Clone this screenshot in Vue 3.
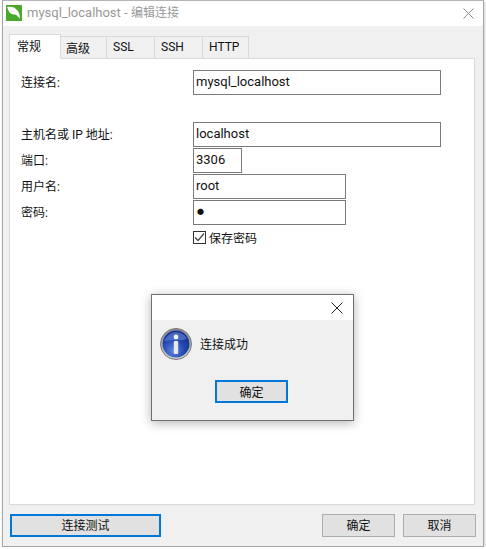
<template>
  <div class="window">
    <div class="titlebar">
      <svg class="logo" width="16" height="16" viewBox="0 0 16 16">
        <rect width="16" height="16" fill="#4aa82c" />
        <path d="M1 2c4-1 8 0 10 3 2 2 3 5 3 9l-1.500-2.500L12 13c0-2-1-3-3-3.500-2 0-4-.5-5.500-2C2.500 6 2 4 1 2z" fill="#fff" />
      </svg>
      <span class="title">mysql_localhost - <span class="title-cjk">编辑连接</span></span>
      <svg class="close close-main" width="11" height="11" viewBox="0 0 11 11">
        <path d="M.5.5l10 10M10.5.5l-10 10" stroke="#8a8a8a" fill="none" />
      </svg>
    </div>

    <div class="body">
      <div class="tabs">
        <div
          v-for="(tab, i) in tabs"
          :key="tab"
          class="tab"
          :class="{ active: i === 0 }"
        >
          {{ tab }}
        </div>
      </div>

      <div class="panel">
        <div v-for="row in rows" :key="row.label" class="row" :class="row.cls">
          <label class="label">{{ row.label }}</label>
          <div class="input" :class="row.size">{{ row.value }}</div>
        </div>
        <div class="check-row">
          <span class="checkbox">
            <svg width="11" height="11" viewBox="0 0 11 11">
              <path d="M1 5.5l3 3 6-7" stroke="#444" stroke-width="1.2" fill="none" />
            </svg>
          </span>
          <span>保存密码</span>
        </div>
      </div>

      <div class="footer">
        <button class="btn primary test">连接测试</button>
        <div class="right-btns">
          <button class="btn">确定</button>
          <button class="btn">取消</button>
        </div>
      </div>
    </div>

    <div class="dialog">
      <div class="dialog-title">
        <svg width="12" height="12" viewBox="0 0 12 12">
          <path d="M.5.5l11 11M11.5.5l-11 11" stroke="#222" fill="none" />
        </svg>
      </div>
      <div class="dialog-body">
        <div class="message">
          <svg class="info" width="32" height="32" viewBox="0 0 32 32">
            <defs>
              <radialGradient id="blue" cx="40%" cy="75%" r="75%">
                <stop offset="0" stop-color="#5f86e0" />
                <stop offset="0.55" stop-color="#2347b0" />
                <stop offset="1" stop-color="#14308f" />
              </radialGradient>
              <linearGradient id="ring" x1="0" y1="0" x2="0" y2="1">
                <stop offset="0" stop-color="#8d8d8d" />
                <stop offset="1" stop-color="#d5d5d5" />
              </linearGradient>
            </defs>
            <circle cx="16" cy="16" r="15.5" fill="url(#ring)" stroke="#777" stroke-width="1" />
            <circle cx="16" cy="16" r="13.5" fill="url(#blue)" />
            <path d="M4 13c3-6 8-9 12-9s8 2 11 6c-3 4-14 1-23 3z" fill="#7f9fe6" opacity="0.45" />
            <circle cx="16" cy="9" r="2.4" fill="#f2f2f2" />
            <rect x="13.8" y="13" width="4.4" height="13" rx="1" fill="#e9e9e9" />
          </svg>
          <span class="message-text">连接成功</span>
        </div>
        <button class="btn primary ok">确定</button>
      </div>
    </div>
  </div>
</template>

<script setup>
const tabs = ["常规", "高级", "SSL", "SSH", "HTTP"];

const rows = [
  { label: "连接名:", value: "mysql_localhost", size: "wide", cls: "first" },
  { label: "主机名或 IP 地址:", value: "localhost", size: "wide" },
  { label: "端口:", value: "3306", size: "small" },
  { label: "用户名:", value: "root", size: "medium" },
  { label: "密码:", value: "●", size: "medium pass" },
];
</script>

<style>
html,
body {
  background: #fff;
}
</style>

<style scoped>
* {
  box-sizing: border-box;
}

.window {
  position: relative;
  width: 482px;
  height: 547px;
  margin-left: 2px;
  border: 1px solid #a6a6a6;
  border-top-color: #b5b5b5;
  background: #f0f0f0;
  box-shadow: 1px 1px 3px rgba(0, 0, 0, 0.2);
  font-family: Roboto, "Noto Sans CJK SC", sans-serif;
  font-size: 12px;
  color: #111;
}

.titlebar {
  display: flex;
  align-items: center;
  height: 25px;
  padding-left: 3px;
  padding-bottom: 2px;
  background: #fff;
}

.logo {
  flex: none;
}

.title {
  margin-left: 5px;
  padding-bottom: 2px;
  font-size: 13px;
  color: #999;
}

.title-cjk {
  font-size: 12px;
}

.close-main {
  margin-left: auto;
  margin-right: 9px;
  margin-top: 2px;
}

.body {
  padding: 9px 8px 0 6px;
}

.tabs {
  display: flex;
  height: 24px;
}

.tab {
  display: flex;
  align-items: center;
  width: 49px;
  height: 23px;
  margin-top: 1px;
  margin-left: -1px;
  padding-left: 6px;
  padding-bottom: 1px;
  border: 1px solid #d9d9d9;
  background: #f0f0f0;
}

.tab:first-child {
  margin-left: 0;
}

.tab.active {
  position: relative;
  z-index: 1;
  width: 52px;
  height: 25px;
  margin-top: -1px;
  padding-left: 7px;
  padding-bottom: 2px;
  background: #fff;
  border-bottom-color: #fff;
}

.tab:nth-child(2),
.tab:last-child {
  width: 47px;
}

.tab:nth-child(2) {
  padding-left: 5px;
}

.panel {
  height: 447px;
  margin-top: -1px;
  padding-top: 11px;
  padding-left: 11px;
  border: 1px solid #d9d9d9;
  background: #fff;
}

.row {
  display: flex;
  align-items: center;
  height: 25px;
  margin-bottom: 1px;
}

.row.first {
  margin-bottom: 27px;
}

.label {
  flex: none;
  width: 172px;
  padding-bottom: 3px;
}

.input {
  display: flex;
  align-items: center;
  height: 25px;
  padding-left: 2px;
  padding-bottom: 3px;
  border: 1px solid #7a7a7a;
  background: #fff;
  font-size: 13px;
}

.wide {
  width: 248px;
}

.medium {
  width: 153px;
}

.small {
  width: 49px;
}

.pass {
  font-size: 7px;
  padding-left: 3px;
}

.check-row {
  display: flex;
  align-items: center;
  gap: 3px;
  margin-top: 4px;
  margin-left: 172px;
}

.checkbox {
  display: flex;
  align-items: center;
  justify-content: center;
  width: 13px;
  height: 13px;
  border: 1px solid #333;
}

.footer {
  display: flex;
  justify-content: space-between;
  margin-top: 9px;
  margin-right: -1px;
  margin-left: 1px;
}

.right-btns {
  display: flex;
  gap: 8px;
}

.btn {
  width: 73px;
  height: 23px;
  padding: 0;
  border: 1px solid #adadad;
  background: #e1e1e1;
  font-family: inherit;
  font-size: 12px;
  color: #111;
}

.footer .btn {
  padding-bottom: 2px;
}

.btn.primary {
  border: 2px solid #0078d7;
}

.test {
  width: 151px;
}

.dialog {
  position: absolute;
  left: 148px;
  top: 293px;
  width: 203px;
  height: 127px;
  border: 1px solid #6f6f6f;
  box-shadow: 0 2px 10px rgba(0, 0, 0, 0.3);
  background: #f0f0f0;
}

.dialog-title {
  display: flex;
  align-items: center;
  justify-content: flex-end;
  height: 25px;
  padding-right: 10px;
  background: #fff;
}

.dialog-body {
  display: flex;
  flex-direction: column;
  align-items: center;
  padding-top: 8px;
}

.message {
  display: flex;
  align-items: center;
  gap: 8px;
  align-self: flex-start;
  padding-left: 8px;
}

.message-text {
  padding-bottom: 2px;
}

.ok {
  margin-top: 20px;
  margin-right: 2px;
}
</style>
